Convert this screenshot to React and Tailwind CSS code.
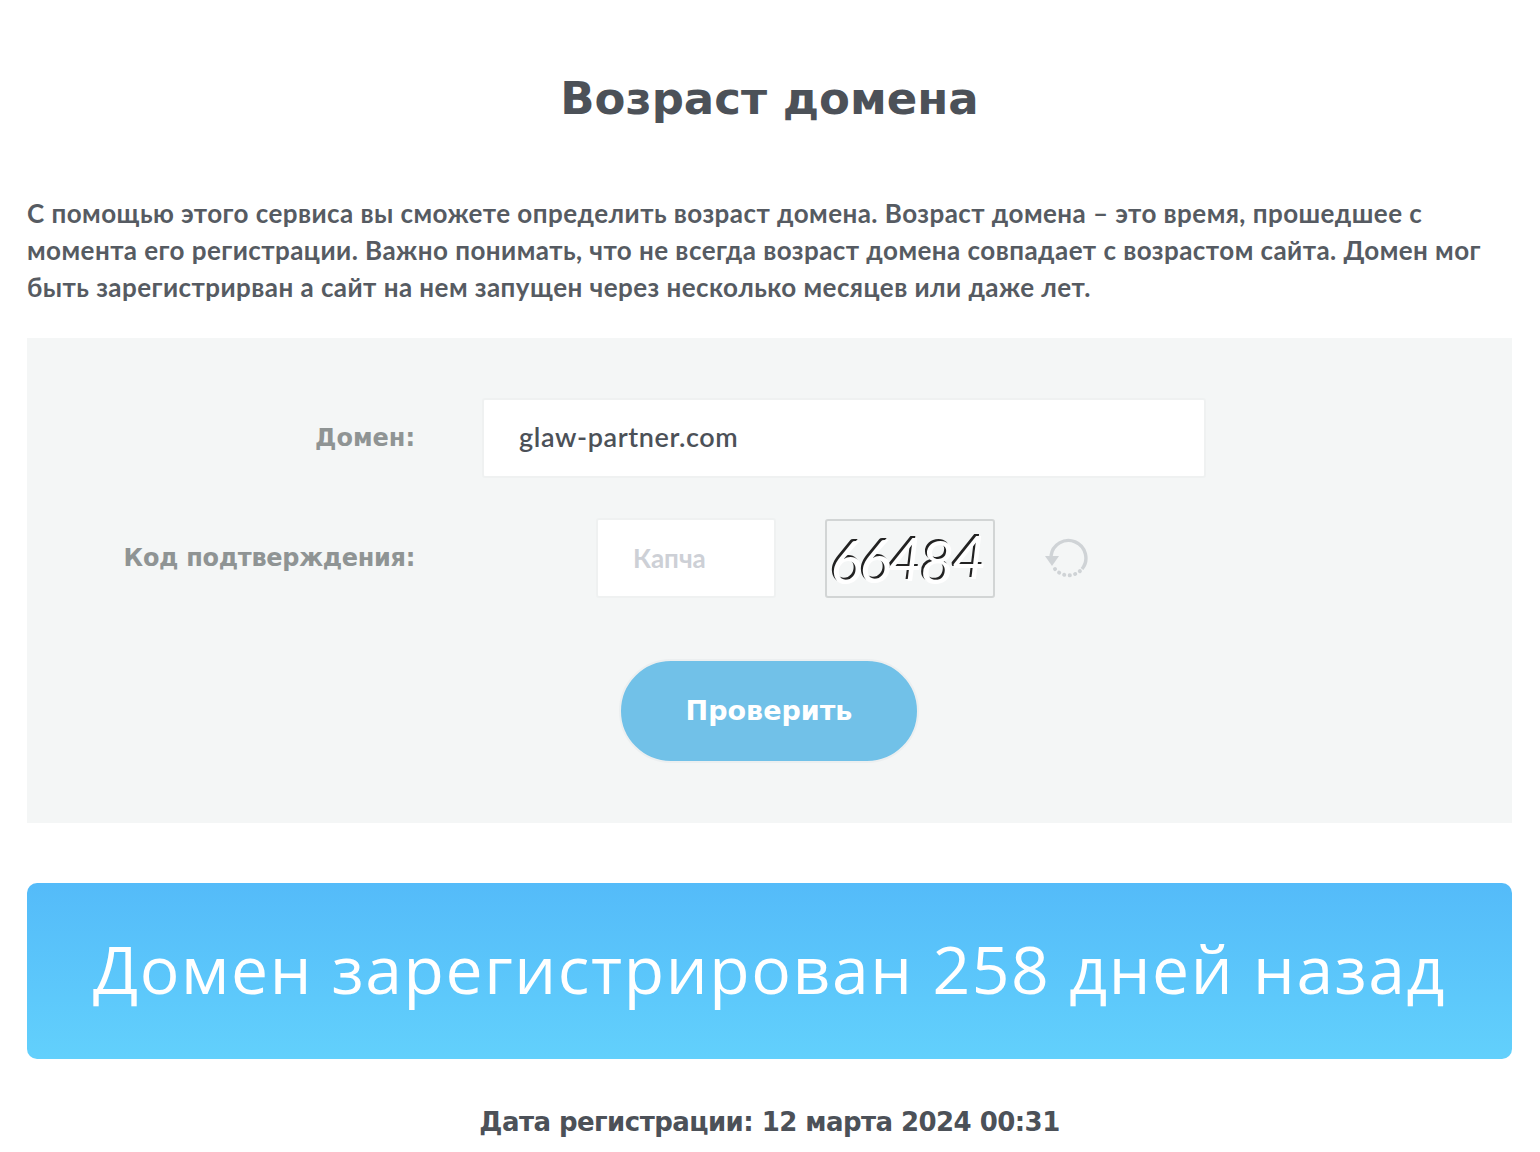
import React from 'react';

const RefreshIcon = () => (
  <svg width="44" height="42" viewBox="0 0 44 42" fill="none" className="block">
    <path d="M6 19 A17.5 17.5 0 1 1 37 32" stroke="#cfd3d6" strokeWidth="3.4" />
    <path d="M0 19 L14 19 L7 29 Z" fill="#cfd3d6" />
    <path d="M10 32 A17.5 17.5 0 0 0 35 34" stroke="#cfd3d6" strokeWidth="4" strokeLinecap="round" strokeDasharray="0.1 5.4" />
  </svg>
);

const App = () => {
  return (
    <div className="bg-white min-h-[1152px] pl-[27px] pr-[28px] text-[#4c5158]">
      <h1 className="pt-[68px] text-center text-[45px] leading-[62px] font-bold text-[#4c5158] font-['DejaVu_Sans',sans-serif]">
        Возраст домена
      </h1>

      <p className="mt-[65px] max-w-[1470px] text-[26px] leading-[37px] font-bold tracking-[0.45px] text-[#565b62] font-['Lato','Open_Sans',sans-serif]">
        С помощью этого сервиса вы сможете определить возраст домена. Возраст домена – это время, прошедшее с момента его регистрации. Важно понимать, что не всегда возраст домена совпадает с возрастом сайта. Домен мог быть зарегистрирван а сайт на нем запущен через несколько месяцев или даже лет.
      </p>

      <div className="mt-[32px] h-[485px] bg-[#f4f6f6] pt-[60px]">
        <div className="flex items-center">
          <label className="w-[388px] text-right text-[24px] font-bold text-[#8f9494] font-['DejaVu_Sans',sans-serif]">Домен:</label>
          <input
            readOnly
            value="glaw-partner.com"
            className="ml-[67px] w-[724px] h-[80px] bg-white border-2 border-[#eff1f1] rounded-[3px] px-[35px] pb-[3px] text-[27px] tracking-[0.6px] text-[#4c5158] font-semibold outline-none font-['Lato',sans-serif]"
          />
        </div>

        <div className="mt-[40px] flex items-center">
          <label className="w-[388px] text-right text-[24px] font-bold tracking-[-0.3px] text-[#8f9494] font-['DejaVu_Sans',sans-serif] whitespace-nowrap">Код подтверждения:</label>
          <input
            readOnly
            placeholder="Капча"
            className="ml-[181px] w-[180px] h-[80px] bg-white border-2 border-[#eff1f1] rounded-[3px] px-[35px] text-[26px] font-bold outline-none placeholder:text-[#cdd0d6] font-['Lato',sans-serif]"
          />
          <div className="ml-[49px] w-[170px] h-[79px] border-2 border-[#d2d5d5] rounded-[3px] flex items-center justify-center overflow-hidden">
            <div className="flex -ml-[6px] text-[60px] leading-none italic font-normal text-white [text-shadow:-2px_-2px_0_#222] font-['Lato',sans-serif] tracking-[-3px]">
              <span className="translate-y-[3px]">6</span>
              <span className="translate-y-[2px]">6</span>
              <span>4</span>
              <span className="translate-y-[3px]">8</span>
              <span className="-translate-y-[2px]">4</span>
            </div>
          </div>
          <div className="ml-[50px]">
            <RefreshIcon />
          </div>
        </div>

        <div className="mt-[61px] pr-[1px] flex justify-center">
          <button className="w-[300px] h-[104px] rounded-full bg-[#71c1e8] border-2 border-[#eceff0] text-white text-[27px] font-bold font-['DejaVu_Sans',sans-serif]">
            Проверить
          </button>
        </div>
      </div>

      <div className="mt-[60px] h-[176px] pb-[5px] rounded-[10px] bg-gradient-to-b from-[#54bbf9] to-[#62d0fc] flex items-center justify-center">
        <span className="text-[66px] tracking-[1.6px] text-white font-normal font-['Open_Sans',sans-serif] whitespace-nowrap">Домен зарегистрирован 258 дней назад</span>
      </div>

      <p className="mt-[44px] text-center text-[26px] leading-[38px] font-bold text-[#4c5158] font-['DejaVu_Sans',sans-serif] tracking-[-0.55px]">
        Дата регистрации: 12 марта 2024 00:31
      </p>
    </div>
  );
};

export default App;
